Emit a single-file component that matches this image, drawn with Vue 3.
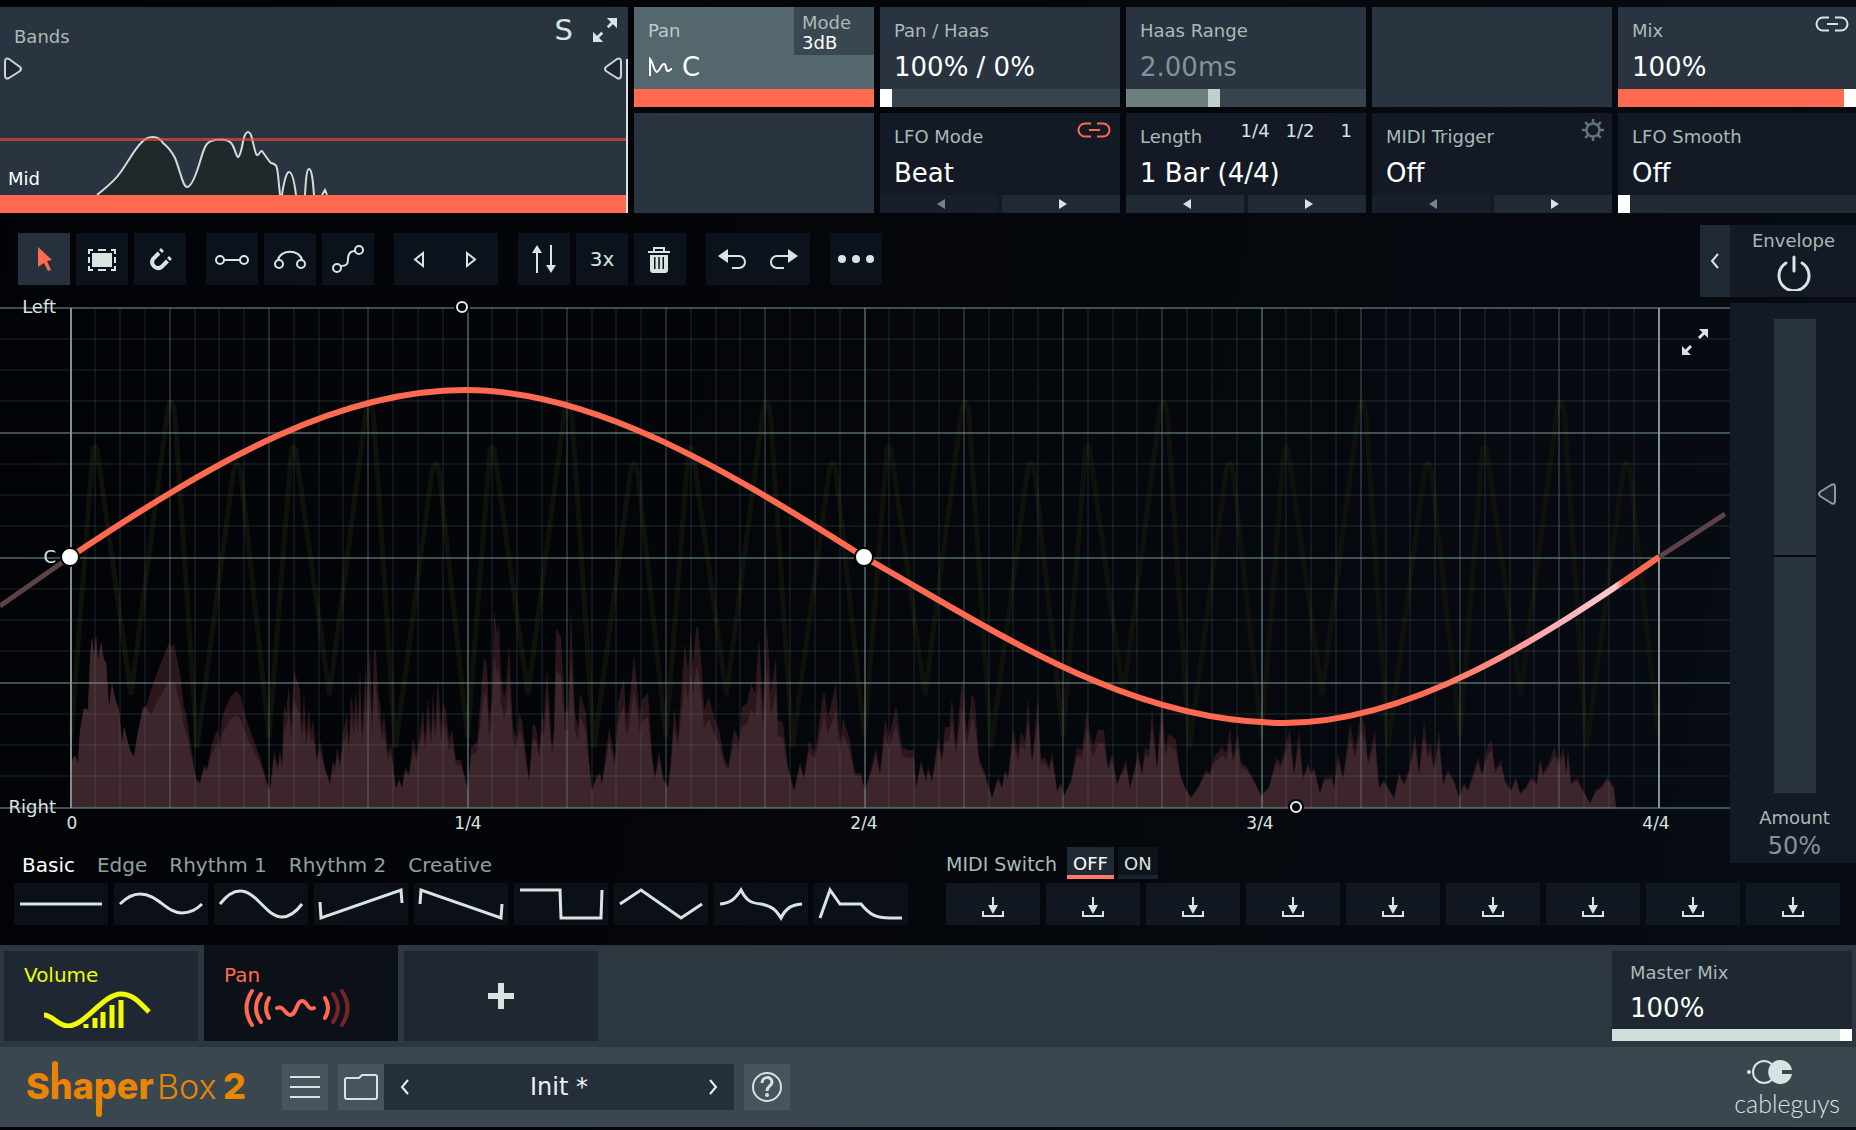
<script setup>
import { ref } from 'vue'

const panHaas = ref(0)
const haasRange = ref(36)
const mix = ref(100)
const smooth = ref(0)
const masterMix = ref(100)
const amount = ref(50)

const tabs = ['Basic', 'Edge', 'Rhythm 1', 'Rhythm 2', 'Creative']
const activeTab = ref('Basic')

const presets = [
  { name: 'Flat', d: 'M6 21H88' },
  { name: 'Soft sine', d: 'M6 21C13 14 19 11 26 11C44 11 52 30 68 30C76 30 82 27 88 21' },
  { name: 'Sine', d: 'M6 21C13 12 19 8 26 8C43 8 52 34 68 34C76 34 82 29 88 21' },
  { name: 'Ramp up', d: 'M6 19L7 35L87 7L88 20' },
  { name: 'Ramp down', d: 'M6 21L7 7L87 35L88 21' },
  { name: 'Square', d: 'M6 7H46L47 35H87L88 7' },
  { name: 'Triangle', d: 'M6 21L27 7L67 35L88 21' },
  { name: 'Spikes', d: 'M6 21C17 20 21 16 27 7C32 17 36 20 47 21C58 23 62 27 67 35C72 25 77 22 88 21' },
  { name: 'Decay', d: 'M6 35L16 7L26 21H47C56 32 62 35 76 35H88' },
]

const left = 71
const right = 1659
const top = 308
const bottom = 808

const rows = Array.from({ length: 17 }, (_, i) => ({
  y: Math.floor(top + (i * (bottom - top)) / 16),
  kind: i % 4 === 0 ? 'major' : 'minor',
}))
const columns = Array.from({ length: 65 }, (_, i) => ({
  x: Math.floor(left + (i * (right - left)) / 64),
  kind: i % 64 === 0 ? 'edge' : i % 16 === 0 ? 'major' : i % 4 === 0 ? 'beat' : 'minor',
}))
const beats = ['0', '1/4', '2/4', '3/4', '4/4'].map((text, i) => ({ text, x: 72 + i * 396 }))

let ghost = `M${left} 737`
for (let i = 0; i < 8; i++) {
  const x = left + i * 198.5
  ghost += `L${x + 22} 449Q${x + 24} 445 ${x + 26} 449L${x + 60} 695L${x + 96} 415Q${x + 100} 388 ${x + 104} 415`
  ghost += `L${x + 126} 748L${x + 162} 475Q${x + 166} 450 ${x + 170} 475L${x + 198} 737`
}

// Recorded level: pairs of x position and height above the baseline.
const level = [
  72,48,75,53,78,45,80,78,84,100,88,98,90,151,92,171,94,151,96,173,98,148,101,166,104,148,106,146,109,101,112,125,
  115,110,119,98,122,65,124,81,130,58,134,51,137,71,143,101,146,101,151,118,158,138,169,165,172,161,174,165,180,135,
  184,101,186,95,192,55,196,30,200,26,204,43,207,40,211,61,217,78,220,68,222,91,230,111,237,117,241,111,244,96,251,75,
  260,51,267,26,270,18,274,58,278,41,280,61,282,43,284,105,286,95,289,123,291,81,294,138,297,128,300,118,302,78,304,115,
  306,75,309,100,311,78,313,88,317,51,320,68,325,41,330,25,333,48,335,41,337,61,340,45,343,75,347,95,349,65,351,115,
  354,88,356,118,358,88,360,141,362,75,366,148,367,105,370,161,372,88,374,158,376,158,378,115,380,105,382,81,384,95,
  388,55,391,65,394,35,396,20,399,30,402,21,405,40,409,35,413,68,417,55,423,100,425,68,428,111,431,75,433,118,435,81,
  438,131,441,81,443,105,446,98,449,68,452,78,456,48,461,48,464,35,468,18,471,61,477,66,484,150,487,143,489,88,492,108,
  494,198,497,175,499,185,501,135,504,111,506,121,509,163,513,81,517,68,519,95,522,88,529,28,533,85,536,81,539,58,
  542,95,544,88,547,140,552,61,554,81,556,180,561,171,565,95,568,98,571,198,575,95,578,81,580,115,586,95,589,48,592,18,
  596,31,600,35,602,25,609,80,615,48,618,105,624,131,626,88,629,101,634,153,640,91,642,108,648,115,652,55,655,31,
  659,58,663,31,668,21,671,48,674,101,678,71,681,115,685,165,688,138,691,180,693,141,696,181,698,181,702,138,704,98,
  709,111,715,88,719,78,724,51,728,41,734,80,739,68,742,101,747,105,751,125,755,115,759,170,763,101,767,185,771,115,
  776,151,778,88,783,85,788,41,794,18,800,46,804,31,809,68,815,55,820,91,824,118,828,91,836,125,840,65,843,91,849,71,
  855,35,861,35,865,18,870,35,876,61,880,35,885,90,889,71,896,103,902,61,908,58,914,58,916,21,921,48,926,28,928,41,
  932,28,938,71,942,51,945,81,949,81,952,111,956,61,962,131,967,75,972,115,975,105,979,51,985,35,992,11,998,31,
  1002,21,1005,38,1008,31,1013,81,1018,55,1021,76,1025,68,1028,111,1032,48,1038,111,1041,48,1045,51,1049,41,1052,56,
  1057,18,1061,25,1064,13,1071,28,1077,61,1082,58,1087,100,1089,81,1093,61,1098,78,1104,78,1108,41,1112,55,1117,25,
  1121,35,1126,48,1130,21,1135,41,1138,58,1142,35,1145,61,1149,58,1152,101,1157,41,1162,115,1165,61,1169,75,1176,68,
  1180,35,1185,21,1191,11,1198,21,1206,38,1210,35,1214,51,1222,61,1226,55,1230,80,1233,51,1238,75,1241,45,1247,41,
  1254,28,1261,13,1269,21,1276,50,1281,45,1290,80,1294,35,1299,78,1303,31,1308,45,1311,35,1314,41,1320,15,1324,30,
  1332,31,1334,21,1338,55,1343,31,1350,85,1355,58,1361,95,1365,81,1368,48,1375,78,1379,21,1384,28,1394,10,1399,35,
  1404,25,1409,38,1415,75,1419,35,1424,88,1428,55,1430,68,1434,41,1439,78,1443,25,1448,38,1454,28,1459,11,1464,25,
  1468,18,1478,51,1482,35,1488,63,1492,68,1495,38,1501,48,1505,28,1511,18,1516,31,1520,15,1526,21,1531,31,1537,25,
  1540,51,1543,35,1549,45,1554,61,1559,48,1564,61,1566,35,1568,61,1571,25,1577,30,1583,18,1590,5,1596,18,1601,21,
  1607,31,1614,21,
]
function area(shape) {
  let d = `M${level[0]} ${bottom}`
  for (let i = 0; i < level.length; i += 2) d += `L${level[i]} ${bottom - shape(level[i + 1], level[i])}`
  return d + `L1616 ${bottom}Z`
}
const peakArea = area((h) => h)
const bodyArea = area((h, x) => (x < 148 ? h : h < 45 ? h * 0.92 : 41 + (h - 45) * 0.72))
</script>

<template>
  <main class="plugin">
    <section class="params">
      <div class="bands">
        <svg class="spectrum" viewBox="0 0 628 206" preserveAspectRatio="none" aria-hidden="true">
          <path class="spectrum-line" d="M97 188C106 180 113 176 120 166C130 152 134 143 141 136C148 128 158 128 163 136C168 140 172 145 175 151C180 163 183 180 187 180C191 180 195 170 198 161C202 149 204 138 208 136C213 132 226 131 231 136C235 140 236 150 238 150C242 148 242 134 245 128C247 124 249 124 251 128C254 138 255 147 257 148C259 149 260 143 262 144C265 148 268 153 271 156C277 157 277 160 278 168L280 188M282 188C283 180 286 165 289 165C293 165 295 180 296 188M305 188C306 170 307 162 309 162C312 162 313 175 314 188M322 188L325 183L327 188" />
          <path d="M0 132.500H628" stroke="#ff4a40" stroke-opacity=".62" stroke-width="3" />
          <path class="handle" d="M5 55V68Q5 73 9 71L20 64Q22 62 20 60L9 52Q5 50 5 55Z" />
          <path class="handle" d="M621 55V68Q621 73 617 71L606 64Q604 62 606 60L617 52Q621 50 621 55Z" />
          <path d="M627 52V206" stroke="#d5e2df" stroke-width="2" />
        </svg>
        <header class="bands-head">
          <span class="label">Bands</span>
          <button class="solo" aria-label="Solo">S</button>
          <button class="expand" aria-label="Expand bands">
            <svg width="24" height="24" viewBox="0 0 26 26"><path d="M15 0H26V11ZM0 15V26H11Z" fill="currentColor" /><path d="M16 10L22 4M10 16L4 22" class="stroke thick" /></svg>
          </button>
        </header>
        <span class="band-name">Mid</span>
        <div class="band-bar"></div>
      </div>

      <div class="cell cell-pan">
        <span class="label">Pan</span>
        <span class="value with-icon">
          <svg width="26" height="22" viewBox="0 0 26 22" aria-hidden="true"><path d="M2 20V3C5 6 6 16 9 16C12 15 13 8 16 8C19 8 17 15 20 15C22 15 22 13 24 13" fill="none" stroke="currentColor" stroke-width="2" /></svg>
          C
        </span>
        <button class="mode"><span>Mode</span><b>3dB</b></button>
        <div class="bar-full"></div>
      </div>
      <div class="cell">
        <label class="label" for="panhaas">Pan / Haas</label>
        <output class="value">100% / 0%</output>
        <input id="panhaas" v-model="panHaas" class="bar" type="range" :style="{ '--fill': panHaas + '%' }" />
      </div>
      <div class="cell">
        <label class="label" for="haas">Haas Range</label>
        <output class="value off">2.00ms</output>
        <input id="haas" v-model="haasRange" class="bar bar-muted" type="range" :style="{ '--fill': haasRange + '%' }" />
      </div>
      <div class="cell"></div>
      <div class="cell">
        <label class="label" for="mix">Mix</label>
        <output class="value">100%</output>
        <button class="corner" aria-label="Link mix">
          <svg width="34" height="16" viewBox="0 0 34 16"><path d="M14 1.500H8A6.500 6.500 0 0 0 8 14.500H14M20 1.500H26A6.500 6.500 0 0 1 26 14.500H20M12 8H23" fill="none" stroke="currentColor" stroke-width="2" /></svg>
        </button>
        <input id="mix" v-model="mix" class="bar" type="range" :style="{ '--fill': mix + '%' }" />
      </div>

      <div class="cell"></div>
      <div class="cell dark">
        <span class="label">LFO Mode</span>
        <output class="value">Beat</output>
        <button class="corner hot" aria-label="Link LFO">
          <svg width="34" height="16" viewBox="0 0 34 16"><path d="M14 1.500H8A6.500 6.500 0 0 0 8 14.500H14M20 1.500H26A6.500 6.500 0 0 1 26 14.500H20M12 8H23" fill="none" stroke="currentColor" stroke-width="2" /></svg>
        </button>
        <div class="steps">
          <button disabled aria-label="Previous mode"><svg width="8" height="10" viewBox="0 0 8 10"><path d="M8 0V10L0 5Z" fill="currentColor" /></svg></button>
          <button aria-label="Next mode"><svg width="8" height="10" viewBox="0 0 8 10"><path d="M0 0V10L8 5Z" fill="currentColor" /></svg></button>
        </div>
      </div>
      <div class="cell dark">
        <span class="label">Length</span>
        <output class="value">1 Bar (4/4)</output>
        <div class="quick"><button>1/4</button><button>1/2</button><button class="one">1</button></div>
        <div class="steps">
          <button aria-label="Shorter"><svg width="8" height="10" viewBox="0 0 8 10"><path d="M8 0V10L0 5Z" fill="currentColor" /></svg></button>
          <button aria-label="Longer"><svg width="8" height="10" viewBox="0 0 8 10"><path d="M0 0V10L8 5Z" fill="currentColor" /></svg></button>
        </div>
      </div>
      <div class="cell dark">
        <span class="label">MIDI Trigger</span>
        <output class="value">Off</output>
        <button class="corner gear" aria-label="Trigger settings">
          <svg width="24" height="24" viewBox="0 0 24 24"><circle cx="12" cy="12" r="6.500" fill="none" stroke="currentColor" stroke-width="2.500" /><path d="M12 1V5M12 19V23M1 12H5M19 12H23M4.200 4.200L7 7M17 17L19.800 19.800M4.200 19.800L7 17M17 7L19.800 4.200" stroke="currentColor" stroke-width="2.500" /></svg>
        </button>
        <div class="steps">
          <button disabled aria-label="Previous trigger"><svg width="8" height="10" viewBox="0 0 8 10"><path d="M8 0V10L0 5Z" fill="currentColor" /></svg></button>
          <button aria-label="Next trigger"><svg width="8" height="10" viewBox="0 0 8 10"><path d="M0 0V10L8 5Z" fill="currentColor" /></svg></button>
        </div>
      </div>
      <div class="cell dark">
        <label class="label" for="smooth">LFO Smooth</label>
        <output class="value">Off</output>
        <input id="smooth" v-model="smooth" class="bar bar-dark" type="range" :style="{ '--fill': smooth + '%' }" />
      </div>
    </section>

    <section class="editor">
      <div class="canvas">
        <div class="tools">
          <div class="tool-group">
            <button class="tool active" aria-label="Select">
              <svg viewBox="0 0 52 52"><path d="M20 14L34 27L29 28L33 37L30 38L26 30L20 34Z" fill="#ff6a50" /></svg>
            </button>
            <button class="tool" aria-label="Marquee">
              <svg viewBox="0 0 52 52"><rect x="16" y="20" width="20" height="14" fill="currentColor" /><path d="M13 21V17H17M35 17H39V21M39 33V37H35M17 37H13V33M22 17H30M22 37H30M13 24V30M39 24V30" class="stroke" /></svg>
            </button>
            <button class="tool" aria-label="Snap">
              <svg viewBox="0 0 52 52"><path d="M25 20L19 26A6 6 0 0 0 27.500 34L33.500 28" class="stroke fat" /><path d="M26.500 18.500L28.500 16.500M34.500 26.500L36.500 24.500" class="stroke fat" /></svg>
            </button>
          </div>
          <div class="tool-group">
            <button class="tool" aria-label="Line">
              <svg viewBox="0 0 52 52"><path d="M18 27H34" class="stroke" /><circle cx="14" cy="27" r="4" class="stroke" /><circle cx="38" cy="27" r="4" class="stroke" /></svg>
            </button>
            <button class="tool" aria-label="Arc">
              <svg viewBox="0 0 52 52"><path d="M14 27C16 16 36 16 38 27" class="stroke" /><circle cx="15" cy="31" r="4" class="stroke" /><circle cx="37" cy="31" r="4" class="stroke" /></svg>
            </button>
            <button class="tool" aria-label="S-curve">
              <svg viewBox="0 0 52 52"><path d="M18 33C25 33 26 31 26 26C26 21 28 18 33 18" class="stroke" /><circle cx="15" cy="35" r="4" class="stroke" /><circle cx="37" cy="17" r="4" class="stroke" /></svg>
            </button>
          </div>
          <div class="tool-group joined">
            <button class="tool" aria-label="Shift left"><svg viewBox="0 0 52 52"><path d="M29 20V33L21 26.500Z" class="stroke" /></svg></button>
            <button class="tool" aria-label="Shift right"><svg viewBox="0 0 52 52"><path d="M21 20V33L29 26.500Z" class="stroke" /></svg></button>
          </div>
          <div class="tool-group">
            <button class="tool" aria-label="Flip">
              <svg viewBox="0 0 52 52"><path d="M19 18V40M33 12V34" class="stroke" /><path d="M14 20L19 12L24 20ZM28 32L33 40L38 32Z" fill="currentColor" /></svg>
            </button>
            <button class="tool text-tool">3x</button>
            <button class="tool" aria-label="Delete">
              <svg viewBox="0 0 52 52"><path d="M14 19H36M20 18V15H30V18" class="stroke" /><path fill-rule="evenodd" d="M16 22H34V37Q34 40 31 40H19Q16 40 16 37ZM20 24V36H21.500V24ZM24.300 24V36H25.800V24ZM28.500 24V36H30V24Z" fill="currentColor" /></svg>
            </button>
          </div>
          <div class="tool-group joined">
            <button class="tool" aria-label="Undo"><svg viewBox="0 0 52 52"><path d="M20 23H33A6 6 0 0 1 33 35H26" class="stroke" /><path d="M12 23L22 16V30Z" fill="currentColor" /></svg></button>
            <button class="tool" aria-label="Redo"><svg viewBox="0 0 52 52"><path d="M32 23H19A6 6 0 0 0 19 35H26" class="stroke" /><path d="M40 23L30 16V30Z" fill="currentColor" /></svg></button>
          </div>
          <div class="tool-group">
            <button class="tool" aria-label="More"><svg viewBox="0 0 52 52"><g fill="currentColor"><circle cx="12" cy="26" r="4" /><circle cx="26" cy="26" r="4" /><circle cx="40" cy="26" r="4" /></g></svg></button>
          </div>
          <button class="collapse" aria-label="Collapse envelope">
            <svg width="10" height="16" viewBox="0 0 10 16"><path d="M8 1L2 8L8 15" class="stroke" /></svg>
          </button>
        </div>

        <div class="graph">
          <svg viewBox="0 297 1730 550">
            <defs>
              <linearGradient id="playhead" gradientUnits="userSpaceOnUse" x1="0" y1="0" x2="1730" y2="0">
                <stop offset=".820" stop-color="#ff6a50" />
                <stop offset=".850" stop-color="#ff8072" />
                <stop offset=".895" stop-color="#ffabb0" />
                <stop offset=".934" stop-color="#ffc9d3" />
                <stop offset=".938" stop-color="#ff6a50" />
              </linearGradient>
            </defs>
            <path :d="ghost" fill="none" stroke="#0f120b" stroke-width="5" />
            <path :d="peakArea" fill="#2b161b" />
            <path :d="bodyArea" fill="#3d262b" />
            <line v-for="c in columns" :key="'c' + c.x" :x1="c.x" :x2="c.x" :y1="top" :y2="bottom" :class="['grid', c.kind]" />
            <line v-for="r in rows" :key="'r' + r.y" x1="0" x2="1730" :y1="r.y" :y2="r.y" :class="['grid', r.kind]" />
            <path d="M0 606L70 557M1659 557L1725 514" fill="none" stroke="#5b4347" stroke-width="5" />
            <path
              d="M70 557C220 457 340 390 465 390C590 390 718 464 864 557C1000 634 1130 723 1284 723C1410 723 1540 640 1659 557"
              fill="none" stroke="url(#playhead)" stroke-width="6"
            />
            <g stroke="#04060a" stroke-width="2">
              <circle cx="70" cy="557" r="9" fill="#fff" />
              <circle cx="864" cy="557" r="9" fill="#fff" />
            </g>
            <g fill="#04060a">
              <circle cx="462" cy="307" r="8" />
              <circle cx="1296" cy="807" r="8" />
            </g>
            <g fill="#04060a" stroke="#e8f0ee" stroke-width="2">
              <circle cx="462" cy="307" r="5" />
              <circle cx="1296" cy="807" r="5" />
            </g>
            <g class="axis" text-anchor="end">
              <text x="56" y="313">Left</text>
              <text x="56" y="563">C</text>
              <text x="56" y="813">Right</text>
            </g>
            <g class="axis beat-text" text-anchor="middle">
              <text v-for="b in beats" :key="b.text" :x="b.x" y="829">{{ b.text }}</text>
            </g>
          </svg>
          <button class="graph-expand" aria-label="Expand graph">
            <svg width="26" height="26" viewBox="0 0 26 26"><path d="M17 0H26V9ZM0 17V26H9Z" fill="currentColor" /><path d="M17 9L23 3M9 17L3 23" class="stroke thick" /></svg>
          </button>
        </div>

        <div class="library-head">
          <nav class="tabs">
            <button v-for="t in tabs" :key="t" :class="{ on: t === activeTab }" @click="activeTab = t">{{ t }}</button>
          </nav>
          <div class="midi">
            <span class="label">MIDI Switch</span>
            <button class="toggle on">OFF</button>
            <button class="toggle">ON</button>
          </div>
        </div>
      </div>

      <aside class="envelope">
        <div class="env-head">
          <span class="label">Envelope</span>
          <button aria-label="Envelope power">
            <svg width="36" height="36" viewBox="0 0 36 36"><path d="M10 8A15 15 0 1 0 26 8M18 2V16" fill="none" stroke="currentColor" stroke-width="3" stroke-linecap="round" /></svg>
          </button>
        </div>
        <div class="env-body">
          <div class="env-slider">
            <input id="amount" v-model="amount" type="range" />
            <svg class="env-mark" width="20" height="24" viewBox="0 0 20 24" aria-hidden="true"><path d="M18 5V19Q18 23 14 21L3 14Q1 12 3 10L14 3Q18 1 18 5Z" fill="#1d2833" stroke="#8b9b9c" stroke-width="2" /></svg>
          </div>
          <label class="label" for="amount">Amount</label>
          <output class="amount">50%</output>
        </div>
      </aside>
    </section>

    <section class="library">
      <div class="pads">
        <button v-for="p in presets" :key="p.name" :aria-label="p.name">
          <svg viewBox="0 0 94 42"><path :d="p.d" class="stroke thick" /></svg>
        </button>
      </div>
      <div class="pads slots">
        <button v-for="n in 9" :key="n" :aria-label="'Slot ' + n">
          <svg viewBox="0 0 94 42"><path d="M37 28V33H57V28" class="stroke" /><path d="M47 14V25" class="stroke" /><path d="M42 22H52L47 31Z" fill="currentColor" /></svg>
        </button>
      </div>
    </section>

    <section class="modules">
      <button class="module volume">
        <span>Volume</span>
        <svg width="108" height="38" viewBox="0 0 108 38"><path d="M1 25C10 25 14 36 25 36C42 36 60 4 78 4C90 4 97 13 106 22" fill="none" stroke="currentColor" stroke-width="5" /><path d="M43 38V34M52 38V28M60 38V22M69 38V15M78 38V10" stroke="currentColor" stroke-width="5" /></svg>
      </button>
      <button class="module current">
        <span>Pan</span>
        <svg width="108" height="40" viewBox="0 0 108 40"><g fill="none" stroke="currentColor" stroke-width="4" stroke-linecap="round"><path d="M9 3Q-2 20 9 37M18 6Q8 20 18 34M26 10Q20 20 26 30M34 20C41 17 42 27 47 27C54 27 53 13 59 13C65 13 64 23 71 20M82 10Q88 20 82 30" /><path d="M90 6Q100 20 90 34M99 3Q110 20 99 37" stroke="#77242a" /></g></svg>
      </button>
      <button class="module add" aria-label="Add module">
        <svg width="26" height="26" viewBox="0 0 26 26"><path d="M13 0V26M0 13H26" stroke="currentColor" stroke-width="6" /></svg>
      </button>
      <div class="master">
        <label class="label" for="master">Master Mix</label>
        <output class="value">100%</output>
        <input id="master" v-model="masterMix" class="bar bar-master" type="range" :style="{ '--fill': masterMix + '%' }" />
      </div>
    </section>

    <footer class="footer">
      <svg class="brand" width="226" height="64" viewBox="0 0 226 64" role="img" aria-label="ShaperBox 2">
        <g fill="#ea8503">
          <text x="0" y="44" class="brand-bold">Shaper</text>
          <text x="131" y="44" class="brand-thin">Box</text>
          <text x="197" y="44" class="brand-bold">2</text>
        </g>
        <path d="M29 9V24M73 44V59" stroke="#ea8503" stroke-width="6" stroke-linecap="round" />
      </svg>
      <button class="square" aria-label="Menu">
        <svg width="32" height="24" viewBox="0 0 32 24"><path d="M1 2H31M1 12H31M1 22H31" class="stroke" /></svg>
      </button>
      <button class="square folder" aria-label="Open preset">
        <svg width="36" height="28" viewBox="0 0 36 28"><path d="M2 7Q2 5 4 5H16L19 2H32Q34 2 34 4V24Q34 26 32 26H4Q2 26 2 24Z" class="stroke" /></svg>
      </button>
      <div class="preset">
        <button aria-label="Previous preset"><svg width="10" height="16" viewBox="0 0 10 16"><path d="M8 1L2 8L8 15" class="stroke" /></svg></button>
        <span>Init *</span>
        <button aria-label="Next preset"><svg width="10" height="16" viewBox="0 0 10 16"><path d="M2 1L8 8L2 15" class="stroke" /></svg></button>
      </div>
      <button class="square" aria-label="Help">
        <svg width="32" height="32" viewBox="0 0 32 32"><circle cx="16" cy="16" r="14" class="stroke" /><path d="M11 12C11 5 21 5 21 11C21 15 16 15 16 20" class="stroke thick" /><circle cx="16" cy="24" r="2" fill="currentColor" /></svg>
      </button>
      <div class="maker">
        <svg width="48" height="26" viewBox="0 0 48 26" aria-hidden="true"><circle cx="3" cy="13" r="2" fill="currentColor" /><circle cx="18" cy="13" r="11" class="stroke" /><path d="M46 11H36V15H46A12 12 0 1 1 46 11Z" fill="currentColor" /></svg>
        <span>cableguys</span>
      </div>
    </footer>
  </main>
</template>

<style>
body {
  margin: 0;
  background: #04070a;
}
</style>

<style scoped>
.plugin {
  padding: 7px 0 3px;
  background: linear-gradient(100deg, #020306 0%, #04070b 55%, #080c14 100%);
  color: #d8e4e1;
  font-family: "DejaVu Sans", Verdana, sans-serif;
  font-size: 18px;
  line-height: 20px;
}
button {
  margin: 0;
  padding: 0;
  border: 0;
  background: none;
  color: inherit;
  font: inherit;
  cursor: pointer;
}
svg {
  display: block;
}
.stroke {
  fill: none;
  stroke: currentColor;
  stroke-width: 2;
}
.thick {
  stroke-width: 3;
}
.fat {
  stroke-width: 4;
}
.label {
  color: #a9bab7;
}
.value {
  color: #fff;
  font-size: 26px;
  line-height: 30px;
}
.value.off {
  color: #82949a;
}

.params {
  display: grid;
  grid-template-columns: 628fr repeat(4, 240fr) 238fr;
  grid-template-rows: 100px 100px;
  gap: 6px;
}
.bands {
  grid-row: 1 / 3;
  position: relative;
  display: flex;
  flex-direction: column;
  background: #293440;
}
.spectrum {
  position: absolute;
  inset: 0;
  width: 100%;
  height: 100%;
}
.spectrum-line {
  fill: #20282b;
  stroke: #d0dedb;
  stroke-width: 2;
}
.handle {
  fill: #1d2631;
  stroke: #c8d6d4;
  stroke-width: 2;
}
.bands-head {
  position: relative;
  display: flex;
  align-items: center;
  height: 60px;
  padding: 0 11px 0 14px;
}
.bands-head .label {
  flex: 1;
}
.solo {
  font-size: 29px;
  line-height: 32px;
  align-self: flex-start;
  margin: 7px 20px 0 0;
}
.expand {
  align-self: flex-start;
  margin-top: 11px;
}
.band-name {
  position: relative;
  margin: auto 0 6px 8px;
  color: #fff;
}
.band-bar {
  position: relative;
  height: 18px;
  margin-right: 2px;
  background: #ff6a50;
}

.cell {
  position: relative;
  display: flex;
  flex-direction: column;
  min-width: 0;
  padding: 14px 0 0 14px;
  background: #293440;
}
.cell .label {
  margin-bottom: 11px;
}
.cell.dark {
  background: #131a25;
}
.cell-pan {
  background: #54676d;
}
.cell-pan .label {
  color: #bccbc9;
}
.with-icon {
  display: flex;
  align-items: center;
  gap: 8px;
}
.mode {
  position: absolute;
  top: 0;
  right: 0;
  display: flex;
  flex-direction: column;
  width: 80px;
  height: 48px;
  padding: 6px 0 0 8px;
  background: #394850;
  color: #a9bab7;
  text-align: left;
}
.mode b {
  color: #fff;
  font-weight: 400;
}
.bar-full {
  height: 18px;
  margin: auto 0 0 -14px;
  background: #ff6a50;
}
.bar {
  --track: #37444d;
  --paint: #ff6a50;
  --thumb: #fff;
  appearance: none;
  display: block;
  width: calc(100% + 14px);
  height: 18px;
  margin: auto 0 0 -14px;
  background: linear-gradient(to right, var(--paint) var(--fill), var(--track) var(--fill));
}
.bar::-webkit-slider-thumb {
  appearance: none;
  width: 12px;
  height: 18px;
  background: var(--thumb);
}
.bar-muted {
  --paint: #6b807f;
  --thumb: #c1cfcd;
}
.bar-dark {
  --track: #1f2a34;
}
.corner {
  position: absolute;
  top: 9px;
  right: 7px;
}
.hot {
  color: #ff6a50;
  right: 9px;
}
.gear {
  top: 5px;
  color: #62737b;
}
.quick {
  position: absolute;
  top: 8px;
  right: 14px;
  display: flex;
  gap: 16px;
}
.quick .one {
  margin-left: 10px;
}
.steps {
  display: flex;
  gap: 4px;
  height: 18px;
  margin: auto 0 0 -14px;
}
.steps button {
  flex: 1;
  display: grid;
  place-items: center;
  padding-left: 4px;
  background: #1f2a34;
}
.steps button:disabled {
  background: #191f2a;
  color: #75858a;
}

.editor {
  display: flex;
  align-items: flex-start;
  padding-top: 12px;
}
.canvas {
  flex: 1;
  min-width: 0;
}
.tools {
  display: flex;
  align-items: flex-start;
  gap: 20px;
  height: 72px;
  padding-left: 18px;
}
.tool-group {
  display: flex;
  gap: 6px;
  padding-top: 8px;
}
.tool-group.joined {
  gap: 0;
}
.tool {
  width: 52px;
  height: 52px;
  background: #0c121b;
}
.tool.active {
  background: #26313d;
}
.text-tool {
  font-size: 20px;
}
.collapse {
  display: grid;
  place-items: center;
  width: 30px;
  height: 72px;
  margin-left: auto;
  background: #1f2a34;
}
.graph {
  position: relative;
}
.graph > svg {
  width: 100%;
  height: auto;
  overflow: visible;
}
.graph-expand {
  position: absolute;
  top: 32px;
  right: 22px;
}
.grid {
  stroke-width: 2;
  shape-rendering: crispEdges;
}
.grid.minor {
  stroke: rgba(120, 160, 170, .11);
}
.grid.beat {
  stroke: rgba(130, 160, 165, .25);
}
.grid.major {
  stroke: rgba(130, 160, 158, .48);
}
.grid.edge {
  stroke: rgba(190, 210, 205, .68);
}
.axis {
  fill: #d8e4e1;
  font-size: 18px;
}
.beat-text {
  font-size: 17px;
}
.library-head {
  display: grid;
  grid-template-columns: 932fr 784fr;
  height: 36px;
  padding-left: 14px;
}
.tabs {
  display: flex;
  gap: 22px;
  padding-left: 8px;
  color: #8fa19f;
  font-size: 20px;
  line-height: 36px;
}
.tabs .on {
  color: #fff;
}
.midi {
  display: flex;
  align-items: flex-start;
  gap: 4px;
}
.midi .label {
  margin-right: 6px;
  font-size: 19px;
  line-height: 34px;
}
.toggle {
  height: 32px;
  padding: 5px 6px 0;
  border-bottom: 4px solid #1a222a;
  background: #0e131a;
}
.toggle.on {
  border-color: #ff7a69;
  background: #1f2a34;
  color: #fff;
}

.envelope {
  width: 126px;
  color: #d8e4e1;
  text-align: center;
}
.env-head {
  display: flex;
  flex-direction: column;
  align-items: center;
  height: 72px;
  padding: 6px 0 0 1px;
  box-sizing: border-box;
  background: #131a25;
}
.env-head button {
  margin-top: 4px;
}
.env-body {
  display: flex;
  flex-direction: column;
  align-items: center;
  height: 544px;
  margin-top: 6px;
  padding: 16px 0 0 3px;
  background: #131a25;
}
.env-slider {
  position: relative;
  margin-bottom: 15px;
}
.env-slider input {
  appearance: none;
  display: block;
  writing-mode: vertical-lr;
  width: 42px;
  height: 474px;
  margin: 0;
  background: #293440;
}
.env-slider input::-webkit-slider-thumb {
  appearance: none;
  width: 42px;
  height: 2px;
  background: #05080c;
}
.env-mark {
  position: absolute;
  top: 163px;
  left: 43px;
}
.amount {
  margin-top: 4px;
  color: #82949a;
  font-size: 24px;
  line-height: 28px;
}

.library {
  display: grid;
  grid-template-columns: 1fr 1fr;
  gap: 38px;
  padding: 0 16px 20px 14px;
}
.pads {
  display: grid;
  grid-template-columns: repeat(9, 1fr);
  gap: 6px;
}
.pads button {
  height: 42px;
  background: #0b1018;
}
.pads svg {
  width: 100%;
  height: 42px;
}
.slots button {
  background: #101721;
}

.modules {
  display: flex;
  align-items: flex-end;
  gap: 6px;
  padding: 0 4px 6px;
  background: #2c3740;
}
.module {
  display: flex;
  flex-direction: column;
  align-items: center;
  width: 194px;
  height: 90px;
  margin-top: 6px;
  padding-bottom: 13px;
  box-sizing: border-box;
  background: #1f2832;
  font-size: 20px;
  line-height: 24px;
}
.module span {
  align-self: flex-start;
  margin: 12px 0 0 20px;
}
.module svg {
  margin-top: auto;
}
.volume {
  color: #f1fb0a;
}
.volume svg,
.current svg {
  margin-right: 8px;
}
.current {
  height: 96px;
  margin-top: 0;
  background: #0c1018;
  color: #ff6a50;
}
.current span {
  margin-top: 18px;
}
.add {
  justify-content: center;
  padding: 0;
}
.add svg {
  margin: 0;
}
.master {
  display: flex;
  flex-direction: column;
  width: 240px;
  height: 90px;
  margin-left: auto;
  padding: 12px 0 0 18px;
  box-sizing: border-box;
  background: #1f2832;
}
.master .label {
  margin-bottom: 10px;
}
.bar-master {
  --paint: #d0dedc;
  width: 240px;
  height: 12px;
  margin-left: -18px;
}
.bar-master::-webkit-slider-thumb {
  height: 12px;
}

.footer {
  display: flex;
  align-items: center;
  height: 80px;
  padding: 0 16px 0 26px;
  background: #3a474e;
}
.brand {
  margin-right: 30px;
  overflow: visible;
}
.brand-bold {
  font: 800 36px Inter, sans-serif;
}
.brand-thin {
  font: 300 34px Inter, sans-serif;
}
.square {
  display: grid;
  place-items: center;
  width: 46px;
  height: 46px;
  background: #46555d;
}
.folder {
  margin-left: 10px;
}
.preset {
  display: flex;
  align-items: center;
  justify-content: space-between;
  width: 350px;
  height: 46px;
  margin-right: 10px;
  background: #252f3b;
  color: #e9f2f0;
  font-size: 24px;
}
.preset button {
  padding: 12px 16px;
}
.maker {
  display: flex;
  flex-direction: column;
  align-items: center;
  margin-left: auto;
  padding-top: 6px;
  font: 300 25px/36px Lato, sans-serif;
}
.maker svg {
  margin-right: 34px;
}
</style>
